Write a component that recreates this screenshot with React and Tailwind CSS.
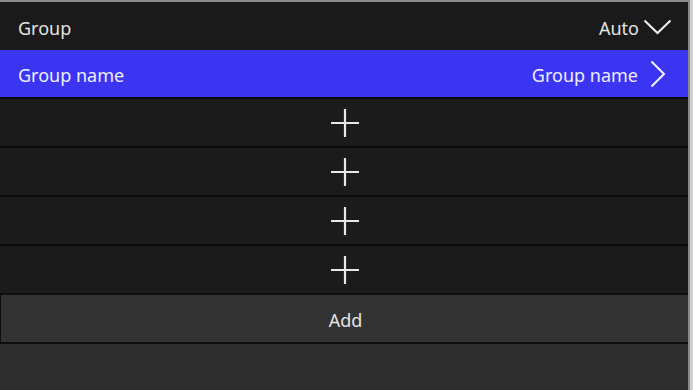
function PlusRow() {
  return (
    <div className="h-[49px] border-t-2 border-[#0a0a0a] bg-[#1b1b1b] flex items-center justify-center pl-[2px]">
      <svg width="32" height="32" viewBox="0 0 32 32" className="text-[#e8e8e8]">
        <path d="M16 2v28M2 16h28" stroke="currentColor" strokeWidth="2.2" fill="none" />
      </svg>
    </div>
  )
}

export default function App() {
  return (
    <div className="w-[693px] h-[390px] bg-[#d0d0d0] overflow-hidden" style={{ fontFamily: '"Noto Sans", "Open Sans", sans-serif' }}>
      <div className="w-[690px] h-[390px] border-t-2 border-r-2 border-[#8a8a8a] bg-[#2d2d2e] flex flex-col">
        {/* Header */}
        <div className="h-[48px] shrink-0 bg-[#1a1a1a] flex items-center justify-between pl-[18px] pr-[16px] pt-[4px] text-[18px] text-[#e4e4e4]">
          <span>Group</span>
          <span className="flex items-center gap-[4px]">
            Auto
            <svg width="29" height="16" viewBox="0 0 29 16" className="-mt-[2px]">
              <path d="M1.5 1.5L14.5 14L27.5 1.5" stroke="#f0f0f0" strokeWidth="2" fill="none" />
            </svg>
          </span>
        </div>

        {/* Selected group */}
        <div className="h-[47px] shrink-0 bg-[#3b35f2] flex items-center justify-between pl-[18px] pr-[22px] pt-[4px] text-[18px] text-[#eeeeff]">
          <span>Group name</span>
          <span className="flex items-center gap-[12px]">
            Group name
            <svg width="16" height="28" viewBox="0 0 16 28" className="-mt-[3px]">
              <path d="M1.5 1.5L14 14L1.5 26.5" stroke="#f4f4ff" strokeWidth="2" fill="none" />
            </svg>
          </span>
        </div>

        <PlusRow />
        <PlusRow />
        <PlusRow />
        <PlusRow />

        {/* Add */}
        <div className="h-[51px] shrink-0 border-t-2 border-b-2 border-l border-[#0e0e0e] bg-[#333333] flex items-center justify-center pl-[2px] pt-[3px] text-[18px] text-[#e4e4e4]">
          Add
        </div>
      </div>
    </div>
  )
}
